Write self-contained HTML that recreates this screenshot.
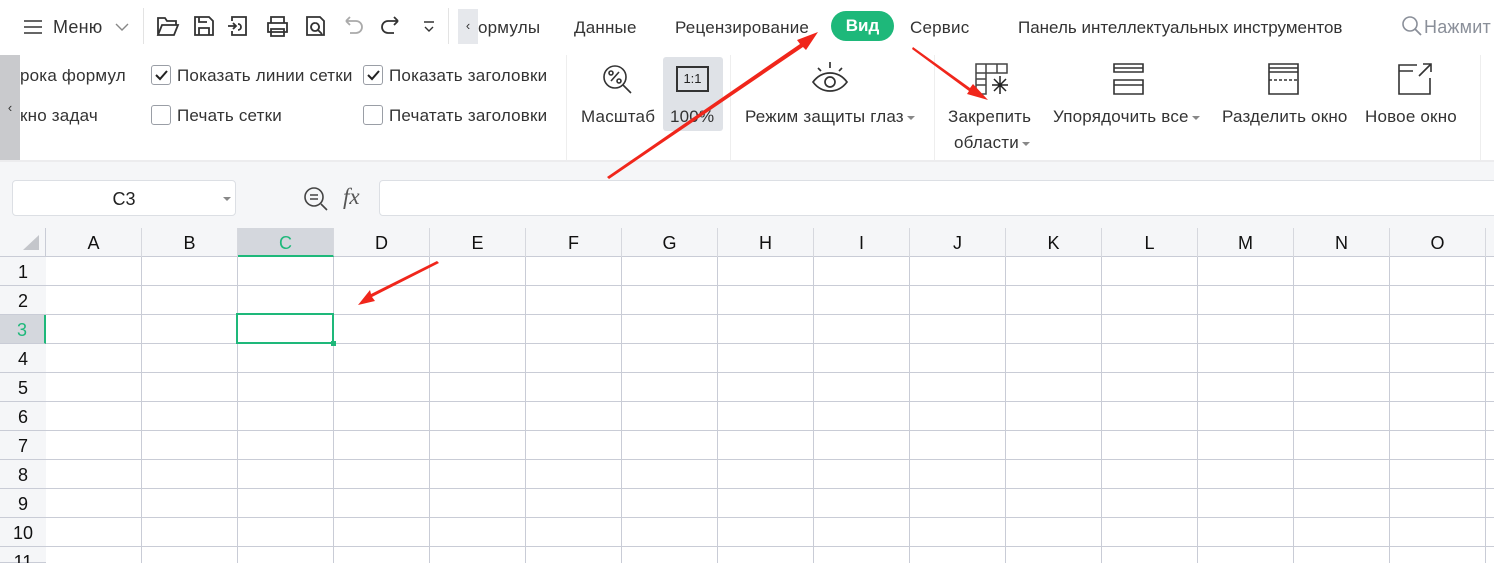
<!DOCTYPE html>
<html><head><meta charset="utf-8"><style>
*{margin:0;padding:0;box-sizing:border-box}
html,body{width:1494px;height:563px;overflow:hidden}
body{background:#fff;font-family:"Liberation Sans","DejaVu Sans",sans-serif;color:#222;position:relative}
.a{position:absolute;white-space:nowrap}
.t{font-size:17px;letter-spacing:0.2px;color:#333}
.cr{display:inline-block;vertical-align:middle;margin-left:3px;border:4px solid transparent;border-top-color:#888;border-bottom-width:0}
.cb{position:absolute;width:20px;height:20px;border:1px solid #9a9ea6;border-radius:3px;background:#fff}
.grid{position:absolute;left:46px;top:257px;width:1448px;height:306px;
background-image:repeating-linear-gradient(90deg,transparent 0 95px,#c9ccd6 95px 96px),repeating-linear-gradient(180deg,transparent 0 28px,#c9ccd6 28px 29px)}
.ch{position:absolute;top:228px;height:29px;width:96px;text-align:center;line-height:30px;font-size:18px;border-right:1px solid #d6d8de;color:#111}
.rh{position:absolute;left:0;width:46px;height:29px;text-align:center;line-height:30px;font-size:18px;color:#111;border-bottom:1px solid #c9ccd6;background:#f5f6f8}
</style></head><body>
<div class="a" style="left:22px;top:18px"><svg width="22" height="18"><path d="M2 3h18M2 9h18M2 15h18" stroke="#333" stroke-width="1.6"/></svg></div>
<div class="a t" style="left:53px;top:17px;font-size:18px">Меню</div>
<div class="a" style="left:114px;top:20px"><svg width="16" height="12"><path d="M2 3l6 6 6-6" stroke="#888" fill="none" stroke-width="1.4"/></svg></div>
<div class="a" style="left:143px;top:8px;width:1px;height:36px;background:#e3e3e3"></div>
<svg class="a" style="left:150px;top:10px" width="300" height="34" fill="none" stroke="#333" stroke-width="1.8">
<path d="M8 25V8h7l2 3h9v4M8 25l4-10h16l-4 10z"/>
<path d="M45 7h14l4 4v14H45zM49 25v-7h10v7M49 7v5h8"/>
<path d="M82 11V7h14v18H82v-4M78 16h8m-3-3l3 3-3 3M88 14c4 0 4 6 0 6"/>
<path d="M121 13V7h13v6M118 13h19v9h-19zM121 19h13v7h-13z"/>
<path d="M157 7h13l4 4v14h-17zM165 13a4 4 0 1 0 .1 0M168 20l4 4"/>
<path d="M196 11h10a6 6 0 0 1 0 12h-6M196 11l4-4M196 11l4 4" stroke="#aaa"/>
<path d="M248 11h-10a6 6 0 0 0 0 12h6M248 11l-4-4M248 11l-4 4"/>
<path d="M274 12h10M275 17l4 4 4-4" stroke-width="1.4"/>
</svg>
<div class="a" style="left:448px;top:8px;width:1px;height:36px;background:#e3e3e3"></div>
<div class="a" style="left:458px;top:9px;width:20px;height:35px;background:#e6e8ec;text-align:center;line-height:33px;font-size:13px;color:#333">‹</div>
<div class="a t" style="left:478px;top:18px;overflow:hidden;width:62px">ормулы</div>
<div class="a t" style="left:574px;top:18px">Данные</div>
<div class="a t" style="left:675px;top:18px">Рецензирование</div>
<div class="a" style="left:831px;top:11px;width:63px;height:30px;border-radius:15px;background:#1eb87a;color:#fff;font-weight:bold;font-size:17px;text-align:center;line-height:30px">Вид</div>
<div class="a t" style="left:910px;top:18px">Сервис</div>
<div class="a t" style="left:1018px;top:18px;letter-spacing:0">Панель интеллектуальных инструментов</div>
<div class="a" style="left:1401px;top:15px"><svg width="22" height="22"><circle cx="9" cy="9" r="7" stroke="#8a8f99" stroke-width="1.6" fill="none"/><path d="M14 14l6 6" stroke="#8a8f99" stroke-width="1.8"/></svg></div>
<div class="a t" style="left:1424px;top:17px;font-size:18px;color:#8a8f99">Нажмит</div>

<div class="a" style="left:0;top:55px;width:20px;height:105px;background:#c9cacd;text-align:center;line-height:105px;font-size:13px;color:#333">‹</div>
<div class="a t" style="left:20px;top:66px">рока формул</div>
<div class="a t" style="left:20px;top:106px">кно задач</div>
<div class="cb" style="left:151px;top:65px"><svg width="18" height="18"><path d="M4 9l4 4 7-8" stroke="#222" stroke-width="2" fill="none"/></svg></div>
<div class="a t" style="left:177px;top:66px">Показать линии сетки</div>
<div class="cb" style="left:151px;top:105px"></div>
<div class="a t" style="left:177px;top:106px">Печать сетки</div>
<div class="cb" style="left:363px;top:65px"><svg width="18" height="18"><path d="M4 9l4 4 7-8" stroke="#222" stroke-width="2" fill="none"/></svg></div>
<div class="a t" style="left:389px;top:66px">Показать заголовки</div>
<div class="cb" style="left:363px;top:105px"></div>
<div class="a t" style="left:389px;top:106px">Печатать заголовки</div>
<div class="a" style="left:566px;top:55px;width:1px;height:105px;background:#eee"></div>
<svg class="a" style="left:600px;top:62px" width="36" height="34" fill="none" stroke="#333" stroke-width="1.6"><circle cx="15" cy="15" r="11"/><path d="M23 23l8 8M11 19l8-9"/><circle cx="11" cy="11" r="2"/><circle cx="19" cy="19" r="2"/></svg>
<div class="a t" style="left:581px;top:107px">Масштаб</div>
<div class="a" style="left:663px;top:57px;width:60px;height:74px;background:#dfe2e7;border-radius:3px"></div>
<div class="a" style="left:676px;top:66px;width:33px;height:26px;border:2px solid #333;text-align:center;font-size:13px;line-height:22px">1:1</div>
<div class="a t" style="left:670px;top:107px">100%</div>
<div class="a" style="left:730px;top:55px;width:1px;height:105px;background:#eee"></div>
<svg class="a" style="left:810px;top:60px" width="40" height="38" fill="none" stroke="#333" stroke-width="1.7"><path d="M20 2v6M8 8l3 3M32 8l-3 3M3 22c9-12 25-12 34 0-9 12-25 12 -34 0z"/><circle cx="20" cy="22" r="5"/></svg>
<div class="a t" style="left:745px;top:107px">Режим защиты глаз<span class="cr"></span></div>
<div class="a" style="left:934px;top:55px;width:1px;height:105px;background:#eee"></div>
<svg class="a" style="left:975px;top:63px" width="36" height="36" fill="none" stroke="#444" stroke-width="1.5"><path d="M1 1h31v9H1zM1 10h10v21H1zM1 16h10M1 22h10M11 1v9M22 1v9"/><path d="M25 13v18M17 22h16M19 16l12 12M31 16L19 28" stroke="#222"/></svg>
<div class="a t" style="left:948px;top:107px">Закрепить</div>
<div class="a t" style="left:954px;top:133px">области<span class="cr"></span></div>
<svg class="a" style="left:1112px;top:62px" width="34" height="34" fill="none" stroke="#333" stroke-width="1.6"><path d="M2 2h29v8H2zM2 6h29M2 18h29v14H2zM2 23h29"/></svg>
<div class="a t" style="left:1053px;top:107px">Упорядочить все<span class="cr"></span></div>
<svg class="a" style="left:1267px;top:62px" width="34" height="34" fill="none" stroke="#333" stroke-width="1.6"><path d="M2 2h29v8H2zM2 6h29M2 10v22h29V10"/><path d="M2 18h30" stroke-dasharray="3 2"/></svg>
<div class="a t" style="left:1222px;top:107px">Разделить окно</div>
<svg class="a" style="left:1397px;top:62px" width="36" height="34" fill="none" stroke="#333" stroke-width="1.6"><path d="M20 3H2v29h31V16M2 9h14M22 14L34 2M26 2h8v8"/></svg>
<div class="a t" style="left:1365px;top:107px">Новое окно</div>
<div class="a" style="left:1480px;top:55px;width:1px;height:105px;background:#eee"></div>

<div class="a" style="left:0;top:160px;width:1494px;height:68px;background:#f5f6f8;border-top:2px solid #ececee"></div>
<div class="a" style="left:12px;top:180px;width:224px;height:36px;background:#fff;border:1px solid #dcdfe4;border-radius:4px;text-align:center;line-height:36px;font-size:18px">C3</div>
<div class="a" style="left:223px;top:197px;border:4px solid transparent;border-top-color:#888"></div>
<svg class="a" style="left:302px;top:185px" width="28" height="28" fill="none" stroke="#444" stroke-width="1.6"><circle cx="12" cy="12" r="9"/><path d="M8 10h8M8 14h8M19 19l6 6"/></svg>
<div class="a" style="left:343px;top:184px;font-family:'Liberation Serif',serif;font-style:italic;font-size:23px;color:#555">fx</div>
<div class="a" style="left:379px;top:180px;width:1120px;height:36px;background:#fff;border:1px solid #dcdfe4;border-radius:4px"></div>

<div class="a" style="left:0;top:228px;width:1494px;height:29px;background:#f5f6f8;border-bottom:1px solid #c9ccd6"></div>
<div class="a" style="left:23px;top:235px;width:0;height:0;border-left:16px solid transparent;border-bottom:15px solid #c4c6cb"></div>
<div class="ch" style="left:46px">A</div><div class="ch" style="left:142px">B</div>
<div class="ch" style="left:238px;background:#d4d7dd;color:#1eb87a;border-bottom:2px solid #1eb87a">C</div>
<div class="ch" style="left:334px">D</div><div class="ch" style="left:430px">E</div><div class="ch" style="left:526px">F</div>
<div class="ch" style="left:622px">G</div><div class="ch" style="left:718px">H</div><div class="ch" style="left:814px">I</div>
<div class="ch" style="left:910px">J</div><div class="ch" style="left:1006px">K</div><div class="ch" style="left:1102px">L</div>
<div class="ch" style="left:1198px">M</div><div class="ch" style="left:1294px">N</div><div class="ch" style="left:1390px">O</div>
<div class="grid"></div>
<div class="a" style="left:45px;top:228px;width:1px;height:335px;background:#c9ccd6"></div>
<div class="rh" style="top:257px">1</div><div class="rh" style="top:286px">2</div>
<div class="rh" style="top:315px;background:#d4d7dd;color:#1eb87a;border-right:2px solid #1eb87a">3</div>
<div class="rh" style="top:344px">4</div><div class="rh" style="top:373px">5</div><div class="rh" style="top:402px">6</div>
<div class="rh" style="top:431px">7</div><div class="rh" style="top:460px">8</div><div class="rh" style="top:489px">9</div>
<div class="rh" style="top:518px">10</div><div class="rh" style="top:547px;height:16px">11</div>
<div class="a" style="left:236px;top:313px;width:98px;height:31px;border:2px solid #1eb87a"></div>
<div class="a" style="left:331px;top:341px;width:5px;height:5px;background:#1eb87a"></div>

<svg class="a" style="left:0;top:0" width="1494" height="563">
<g fill="#f0261b">
<polygon points="607,177 800,44 797,40 818,32 806,50 803,47 609,179"/>
<polygon points="913,47 970,88 973,84 988,100 967,94 969,91 912,49"/>
<polygon points="439,263 372,297 375,301 358,305 370,290 371,294 437,261"/>
</g></svg>
</body></html>
